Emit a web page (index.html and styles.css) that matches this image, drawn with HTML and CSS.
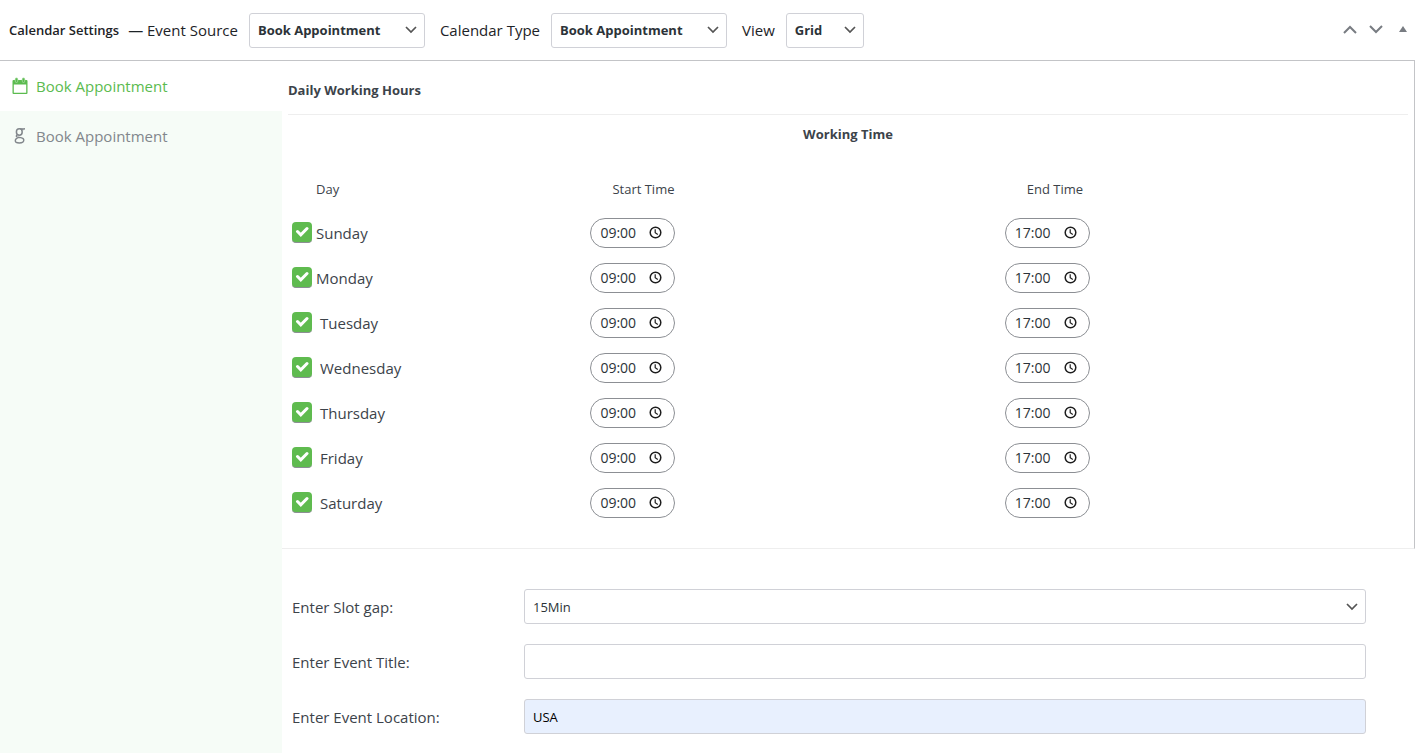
FILE: index.html
```
<!DOCTYPE html>
<html lang="en">
<head>
<meta charset="utf-8">
<title>Calendar Settings</title>
<meta name="viewport" content="width=device-width, initial-scale=1">
<link rel="stylesheet" href="styles.css">
</head>
<body>
<header class="bar">
  <h2 class="bar-title">Calendar Settings</h2>
  <label class="bar-label bar-label--first" for="source">— Event Source</label>
  <select class="select select--bold" id="source"><option>Book Appointment</option></select>
  <label class="bar-label" for="type">Calendar Type</label>
  <select class="select select--bold" id="type"><option>Book Appointment</option></select>
  <label class="bar-label" for="view">View</label>
  <select class="select select--bold select--short" id="view"><option>Grid</option></select>
  <div class="bar-actions">
    <button class="icon-btn" type="button" aria-label="Move up"><svg width="14" height="10" viewBox="0 0 14 10"><path d="M1 8l6-6 6 6" fill="none" stroke="#787c82" stroke-width="2"/></svg></button>
    <button class="icon-btn" type="button" aria-label="Move down"><svg width="14" height="10" viewBox="0 0 14 10"><path d="M1 1l6 6 6-6" fill="none" stroke="#787c82" stroke-width="2"/></svg></button>
    <button class="icon-btn icon-btn--toggle" type="button" aria-label="Toggle panel"><svg width="8" height="10" viewBox="0 0 8 10"><path d="M4 1l4 6H0z" fill="#787c82"/></svg></button>
  </div>
</header>
<div class="layout">
  <nav class="tabs">
    <a class="tab tab--active" href="#hours">
      <svg class="tab-icon" width="16" height="18" viewBox="0 0 16 18"><path d="M2 3h12.500a1 1 0 0 1 1 1v12a1 1 0 0 1-1 1h-13a1 1 0 0 1-1-1V4a1 1 0 0 1 1-1zM1.800 7.500v8.300h12.400V7.500z" fill="#5bbb4f" fill-rule="evenodd"/><path d="M4.500 2.200v1.800M11.500 2.200v1.800" stroke="#a9dca3" stroke-width="3.400" stroke-linecap="round"/><path d="M4.500 2.200v2M11.500 2.200v2" stroke="#5bbb4f" stroke-width="1.800" stroke-linecap="round"/></svg>
      Book Appointment</a>
    <a class="tab" href="#google">
      <svg class="tab-icon" width="16" height="18" viewBox="0 0 16 18" fill="none" stroke="#82878c"><ellipse cx="7.300" cy="5" rx="2.900" ry="3.200" stroke-width="1.500"/><path d="M8 1.700h5l-1.300.9H9.500" stroke-width="1"/><path d="M5.300 7.700c-1.700 1.300-1.200 2.300.7 2.500l2.800.4c1.900.3 3 1.100 3 2.500 0 1.700-1.800 2.900-4.500 2.900-2.500 0-4-.8-4-2.300 0-1.400 1.300-2.500 3-3.300" stroke-width="1.400"/></svg>
      Book Appointment</a>
  </nav>
  <main class="content">
    <section class="hours" id="hours">
      <h3 class="hours-title">Daily Working Hours</h3>
      <table class="schedule">
        <caption class="schedule-caption">Working Time</caption>
        <thead><tr><th class="col-day">Day</th><th class="col-start">Start Time</th><th>End Time</th></tr></thead>
        <tbody id="days"></tbody>
      </table>
    </section>
    <form class="form">
      <div class="field"><label class="field-label" for="gap">Enter Slot gap:</label><select class="select field-input" id="gap"><option>15Min</option></select></div>
      <div class="field"><label class="field-label" for="title">Enter Event Title:</label><input class="text-input field-input" id="title" type="text"></div>
      <div class="field"><label class="field-label" for="location">Enter Event Location:</label><input class="text-input text-input--filled field-input" id="location" type="text" value="USA"></div>
    </form>
  </main>
</div>
<script src="script.js"></script>
</body>
</html>
```
FILE: styles.css
```
* { box-sizing: border-box; }
body {
  margin: 0;
  min-height: 100vh;
  display: flex;
  flex-direction: column;
  background: #fff;
  color: #3c434a;
  font: 15px/24px "Open Sans", "Noto Sans", sans-serif;
}
h2, h3 { margin: 0; }
.bar {
  display: flex;
  align-items: center;
  min-height: 61px;
  padding: 0 8px 0 9px;
  border-bottom: 1px solid #c3c4c7;
  color: #1d2327;
}
.bar-title { font-size: 13px; font-weight: 600; }
.bar-label { margin: 0 11px 0 15px; }
.bar-label--first { margin-left: 9px; }
.bar-actions { display: flex; gap: 12px; margin-left: auto; }
.icon-btn { display: flex; padding: 0; border: 0; background: none; }
.icon-btn--toggle { margin-left: 4px; }
.select, .text-input {
  height: 35px;
  padding: 0 8px;
  border: 1px solid #d0d1d7;
  border-radius: 3px;
  background-color: #fff;
  color: #2c3338;
  font: 13px/20px "Open Sans", "Noto Sans", sans-serif;
}
.select {
  appearance: none;
  width: 176px;
  padding-right: 28px;
  background-image: url("data:image/svg+xml,%3Csvg xmlns='http://www.w3.org/2000/svg' width='12' height='8' viewBox='0 0 12 8'%3E%3Cpath d='M1 1l5 5 5-5' fill='none' stroke='%23555' stroke-width='1.700'/%3E%3C/svg%3E");
  background-repeat: no-repeat;
  background-position: right 7px center;
}
.select--bold { font-weight: 700; }
.select--short { width: 78px; }
.text-input--filled { background-color: #e8f0fe; color: #000; }
.layout { flex: 1; display: grid; grid-template-columns: 282px 1fr; }
.tabs { background: #f6fcf7; }
.tab {
  display: flex;
  align-items: center;
  gap: 8px;
  height: 50px;
  padding-left: 12px;
  color: #82878c;
  text-decoration: none;
}
.tab--active { background: #fff; color: #5bbb4f; }
.hours {
  padding: 9px 6px 23px;
  border-right: 1px solid #c3c4c7;
  border-bottom: 1px solid #eee;
}
.hours-title {
  padding: 8px 0 12px;
  border-bottom: 1px solid #eee;
  font-size: 13px;
  line-height: 24px;
  font-weight: 700;
}
.schedule { width: 100%; border-collapse: collapse; table-layout: fixed; }
.schedule-caption { padding: 7px 0 21px; font-size: 13px; font-weight: 700; }
.schedule th {
  height: 43px;
  padding: 0 0 0 22px;
  text-align: left;
  font-size: 13px;
  font-weight: 400;
}
.schedule .col-day { width: 27%; padding-left: 28px; }
.schedule .col-start { width: 37%; }
.schedule td { height: 45px; padding: 0; }
.day { display: flex; align-items: center; gap: 4px; padding-left: 4px; }
.day--wide { gap: 8px; }
.check {
  appearance: none;
  width: 20px;
  height: 21px;
  margin: 0;
  border-radius: 4px;
  border-bottom: 1px solid #8c8f94;
  background: #5fbb4f url("data:image/svg+xml,%3Csvg xmlns='http://www.w3.org/2000/svg' width='14' height='14' viewBox='0 0 14 14'%3E%3Cpath d='M2.500 6.500l3.300 3.300L12 3.500' fill='none' stroke='%23fff' stroke-width='3' stroke-linecap='round'/%3E%3C/svg%3E") center no-repeat;
}
.time {
  display: flex;
  align-items: center;
  width: 85px;
  height: 30px;
  padding: 0 12px 0 9px;
  border: 1px solid #8c8f94;
  border-radius: 15px;
  background: #fff;
}
.time-input {
  flex: 1;
  min-width: 0;
  padding: 0;
  border: 0;
  background: none;
  color: #2c3338;
  font: 14px/20px "Open Sans", "Noto Sans", sans-serif;
}
.form { display: grid; gap: 20px; padding: 40px 49px 19px 10px; }
.field { display: flex; align-items: center; }
.field-label { width: 232px; }
.field-input { flex: 1; }
```
FILE: script.js
```
const days = ["Sunday", "Monday", "Tuesday", "Wednesday", "Thursday", "Friday", "Saturday"];
const time = (day, kind, value) => `<td><span class="time"><input class="time-input" type="text" value="${value}" aria-label="${day} ${kind} time"><button class="icon-btn" type="button" aria-label="Pick ${day} ${kind} time"><svg width="13" height="13" viewBox="0 0 13 13" fill="none" stroke="#1e1e1e"><circle cx="6.500" cy="6.500" r="5.300" stroke-width="1.500"/><path d="M6.200 3.200v3.600l2.600 1.700" stroke-width="1.200"/></svg></button></span></td>`;
document.getElementById("days").innerHTML = days.map((day, i) => `<tr><td><label class="day${i > 1 ? " day--wide" : ""}"><input class="check" type="checkbox" checked>${day}</label></td>${time(day, "start", "09:00")}${time(day, "end", "17:00")}</tr>`).join("");
```
